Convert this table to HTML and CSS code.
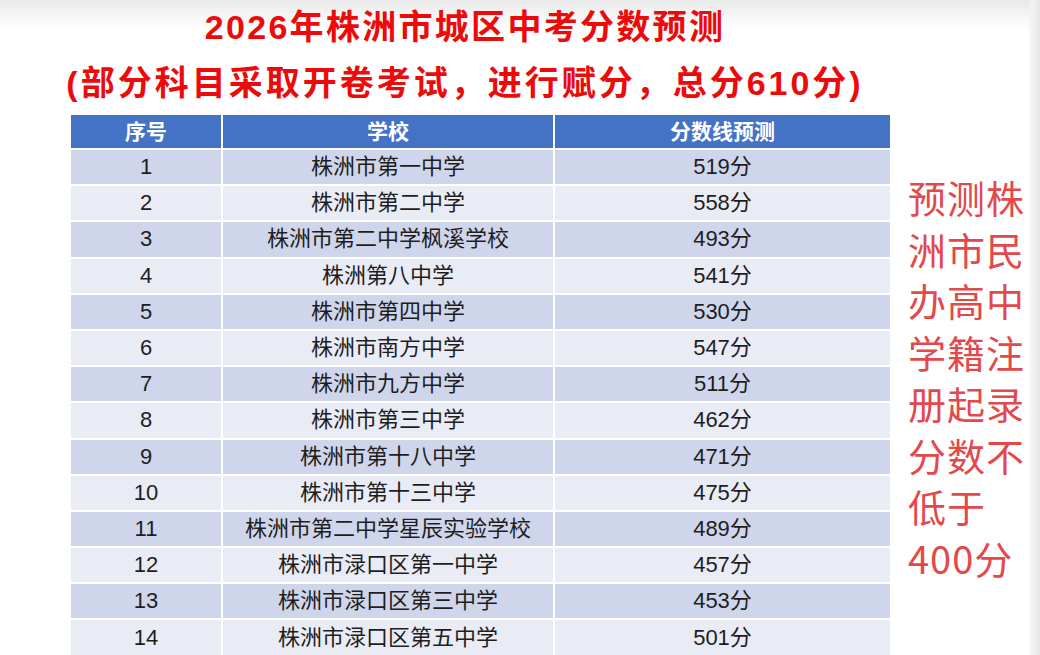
FILE: index.html
```html
<!DOCTYPE html>
<html lang="zh-CN">
<head>
<meta charset="utf-8">
<title>2026年株洲市城区中考分数预测</title>
<link rel="stylesheet" href="styles.css">
</head>
<body>
<div class="page">
  <header class="titles">
    <h1 class="title">2026年株洲市城区中考分数预测</h1>
    <p class="subtitle">(部分科目采取开卷考试，进行赋分，总分610分)</p>
  </header>
  <div class="content">
    <table class="scores">
      <thead>
        <tr><th class="c-no">序号</th><th class="c-school">学校</th><th class="c-score">分数线预测</th></tr>
      </thead>
      <tbody>
        <tr><td>1</td><td>株洲市第一中学</td><td>519分</td></tr>
        <tr><td>2</td><td>株洲市第二中学</td><td>558分</td></tr>
        <tr><td>3</td><td>株洲市第二中学枫溪学校</td><td>493分</td></tr>
        <tr><td>4</td><td>株洲第八中学</td><td>541分</td></tr>
        <tr><td>5</td><td>株洲市第四中学</td><td>530分</td></tr>
        <tr><td>6</td><td>株洲市南方中学</td><td>547分</td></tr>
        <tr><td>7</td><td>株洲市九方中学</td><td>511分</td></tr>
        <tr><td>8</td><td>株洲市第三中学</td><td>462分</td></tr>
        <tr><td>9</td><td>株洲市第十八中学</td><td>471分</td></tr>
        <tr><td>10</td><td>株洲市第十三中学</td><td>475分</td></tr>
        <tr><td>11</td><td>株洲市第二中学星辰实验学校</td><td>489分</td></tr>
        <tr><td>12</td><td>株洲市渌口区第一中学</td><td>457分</td></tr>
        <tr><td>13</td><td>株洲市渌口区第三中学</td><td>453分</td></tr>
        <tr><td>14</td><td>株洲市渌口区第五中学</td><td>501分</td></tr>
      </tbody>
    </table>
    <aside class="note">预测株<br>洲市民<br>办高中<br>学籍注<br>册起录<br>分数不<br>低于<br>400分</aside>
  </div>
</div>
</body>
</html>
```

FILE: styles.css
```css
html, body {
  margin: 0;
  padding: 0;
}
body {
  width: 1040px;
  height: 655px;
  overflow: hidden;
  font-family: "Liberation Sans", "Noto Sans CJK SC", sans-serif;
  background:
    linear-gradient(to right, rgba(255,255,255,0) 1028px, #f2f2f2 1032px, #e6e6e6 1040px),
    linear-gradient(to bottom, #e8e8e8 0px, #f6f6f6 16px, #ffffff 30px);
}
.page {
  width: 1040px;
}
.titles {
  width: 930px;
  text-align: center;
  color: #ec0a0a;
  font-family: "Liberation Sans", "Noto Sans CJK SC", sans-serif;
  font-weight: bold;
}
.title {
  margin: 0;
  padding-top: 4px;
  font-size: 34px;
  line-height: 46px;
  letter-spacing: 2.3px;
}
.subtitle {
  margin: 0;
  padding-top: 10px;
  font-size: 34px;
  line-height: 46px;
  letter-spacing: 3px;
}
.content {
  display: flex;
  align-items: flex-start;
  padding-left: 69px;
  margin-top: 7px;
}
.scores {
  border-collapse: collapse;
  width: 823px;
  table-layout: fixed;
  font-size: 22px;
  line-height: 26px;
  color: #1e1e1e;
}
.scores th, .scores td {
  border: 2px solid #ffffff;
  text-align: center;
  padding: 0;
}
.scores th {
  background: #4472c4;
  color: #ffffff;
  font-weight: bold;
  font-size: 21px;
  height: 33px;
}
.c-no { width: 150px; }
.c-school { width: 330px; }
.scores td {
  height: 34.2px;
}
.scores tbody tr:nth-child(odd) td { background: #cfd5ea; }
.scores tbody tr:nth-child(even) td { background: #e9ebf5; }
.note {
  margin-left: 16px;
  margin-top: 58px;
  color: #e3484b;
  font-size: 38px;
  line-height: 51.5px;
  font-family: "Noto Sans CJK SC", "Liberation Sans", sans-serif;
  font-weight: normal;
  letter-spacing: 1px;
}
```
